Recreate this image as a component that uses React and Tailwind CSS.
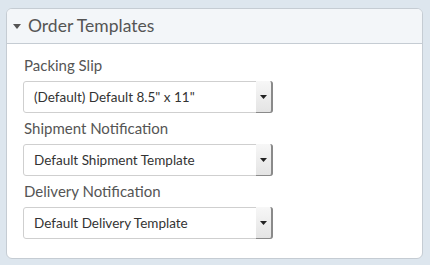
import React from "react";

function Select({ value }) {
  return (
    <div className="relative flex h-[32px] w-[250px] items-center rounded-[3px] border border-[#cfcfcf] bg-white">
      <span className="pl-[10px] text-[13.5px] text-[#333]">{value}</span>
      <div className="absolute right-[-1px] top-[-1px] bottom-[-1px] flex w-[17px] items-center justify-center rounded-r-[3px] border-r-2 border-b border-[#8a8a8a] bg-gradient-to-b from-[#f7f7f7] to-[#e4e4e4]">
        <svg width="7" height="4" viewBox="0 0 7 4" className="mr-[1px]">
          <path d="M0 0h7L3.5 4z" fill="#222" />
        </svg>
      </div>
    </div>
  );
}

export default function App() {
  const rows = [
    ["Packing Slip", '(Default) Default 8.5" x 11"'],
    ["Shipment Notification", "Default Shipment Template"],
    ["Delivery Notification", "Default Delivery Template"],
  ];
  return (
    <div
      className="flex h-[265px] w-[430px] bg-[#dde6ee] pl-[6px] pr-[7px] pt-[8px] pb-[6px]"
      style={{ fontFamily: "Lato, 'Open Sans', sans-serif" }}
    >
      <div className="flex flex-1 flex-col overflow-hidden rounded-[6px] border border-[#c5ccd3] bg-white">
        <div className="flex h-[35px] items-center gap-[7px] border-b border-[#c5ccd3] bg-[#f3f6f9] pl-[6px]">
          <svg width="8" height="5" viewBox="0 0 8 5">
            <path d="M0 0h8L4 5z" fill="#555" />
          </svg>
          <span className="text-[17.5px] text-[#555]">Order Templates</span>
        </div>
        <div className="flex flex-col pl-[16px] pt-[6px]">
          {rows.map(([label, value]) => (
            <div key={label} className="flex flex-col">
              <div className="h-[31px] pl-[1px] pt-[4px] text-[15px] text-[#555]">{label}</div>
              <Select value={value} />
            </div>
          ))}
        </div>
      </div>
    </div>
  );
}
